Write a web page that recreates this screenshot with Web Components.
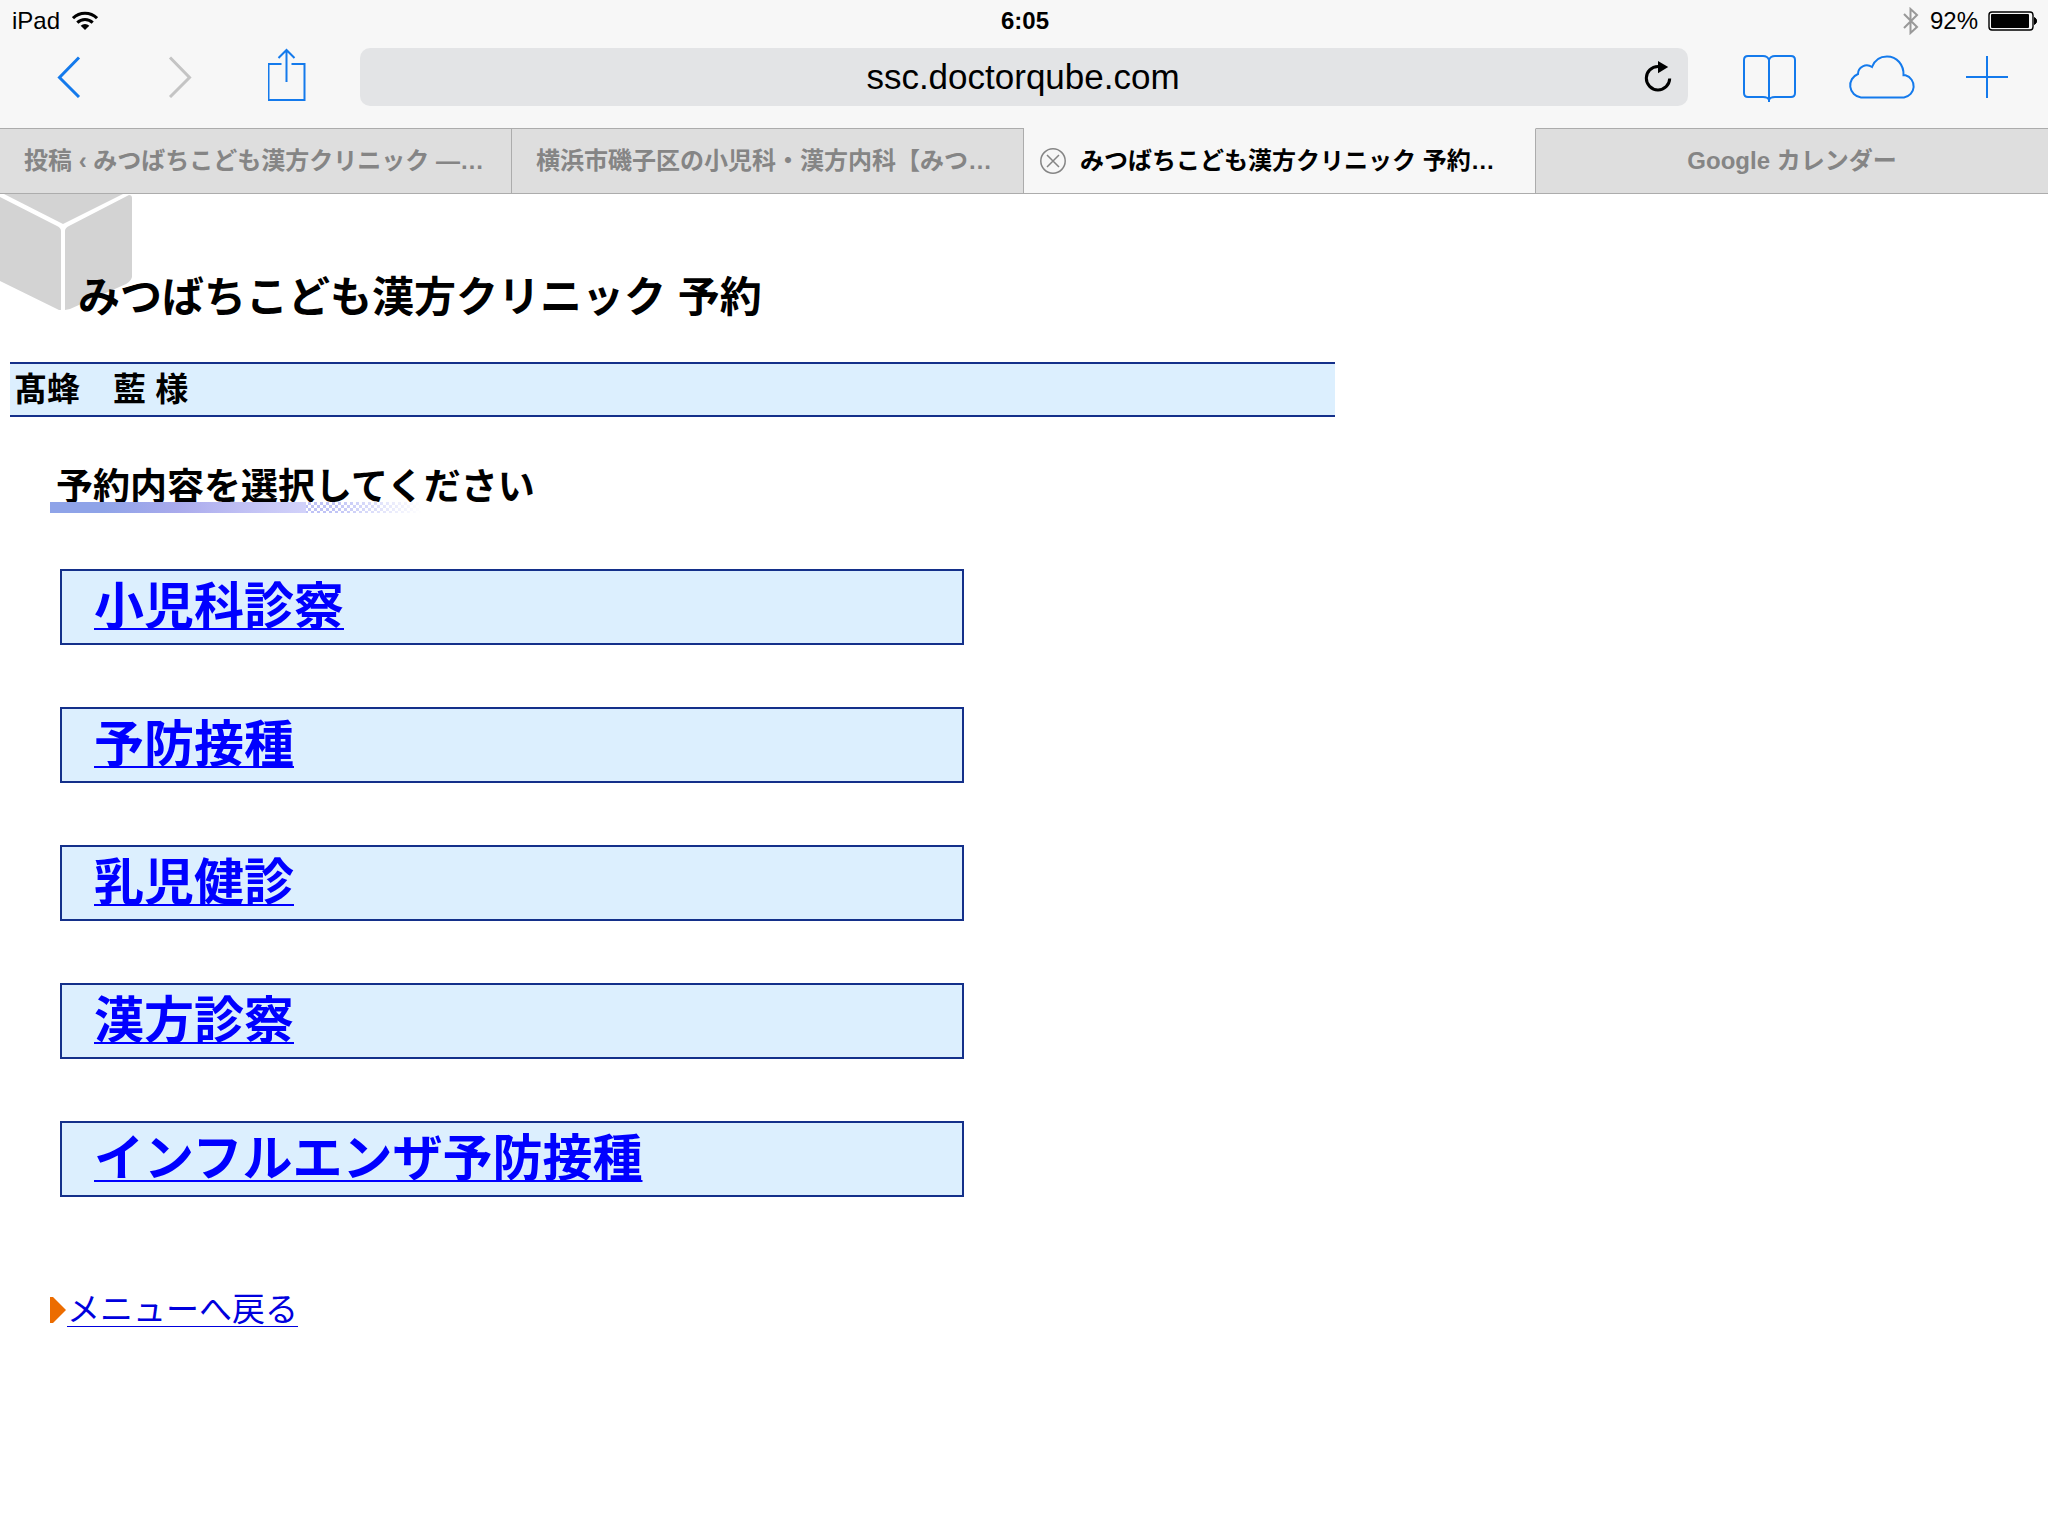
<!DOCTYPE html>
<html lang="ja">
<head>
<meta charset="utf-8">
<meta name="viewport" content="width=device-width, initial-scale=1">
<title>みつばちこども漢方クリニック 予約</title>
<style>
body {
  margin: 0;
  background: #fff;
  color: #000;
  font-family: "Liberation Sans", "Noto Sans CJK JP", sans-serif;
}
</style>
</head>
<body>

<template id="status-bar">
<style>
:host {
  display: grid;
  grid-template-columns: 1fr auto 1fr;
  align-items: center;
  height: 38px;
  padding: 2px 10px 0 12px;
  background: #f7f7f7;
  font-size: 24px;
}
div {
  display: flex;
  align-items: center;
  gap: 12px;
}
.right {
  justify-content: flex-end;
  gap: 10px;
}
svg { display: block; }
</style>
<div>
  <span>iPad</span>
  <svg width="26" height="20" viewBox="0 0 26 20">
    <path d="M1 7.2a17 17 0 0 1 24 0M5.3 11.6a11 11 0 0 1 15.4 0" fill="none" stroke="#000" stroke-width="3"/>
    <path d="M13 19l-4.300-4.300a6.200 6.200 0 0 1 8.600 0z"/>
  </svg>
</div>
<b><slot></slot></b>
<div class="right">
  <svg width="18" height="28" viewBox="0 0 18 28">
    <path d="M2 7l13 13-6.500 6V2l6.500 6L2 21" fill="none" stroke="#999" stroke-width="2"/>
  </svg>
  <span>92%</span>
  <svg width="50" height="20" viewBox="0 0 50 20">
    <rect x="1" y="1" width="44" height="18" rx="3" fill="none" stroke="#000" stroke-width="1.400"/>
    <rect x="3" y="3" width="38" height="14" rx="1"/>
    <path d="M46.500 6.500a4 4 0 0 1 0 7z" stroke="#000"/>
  </svg>
</div>
</template>

<template id="icon-button">
<style>
:host { display: block; }
button {
  display: block;
  padding: 0;
  border: 0;
  background: none;
  color: inherit;
}
</style>
<button type="button"><slot></slot></button>
</template>

<template id="address-field">
<style>
:host {
  display: flex;
  align-items: center;
  flex: 1;
  min-width: 0;
  height: 58px;
  border-radius: 10px;
  background: #e3e4e6;
}
input {
  flex: 1;
  min-width: 0;
  height: 58px;
  margin: 0;
  padding: 0 0 0 42px;
  border: 0;
  background: none;
  font: 35px "Liberation Sans", sans-serif;
  color: #000;
  text-align: center;
}
icon-button { padding-right: 16px; }
svg { display: block; }
</style>
<input type="text" aria-label="アドレス">
<icon-button label="再読み込み">
  <svg width="28" height="32" viewBox="0 0 28 32">
    <path d="M14 5.500A11.700 11.700 0 1 0 25.700 17.500" fill="none" stroke="#000" stroke-width="3"/>
    <path d="M14 0v12.200l10.200-6.100z"/>
  </svg>
</icon-button>
</template>

<template id="browser-toolbar">
<style>
:host {
  display: flex;
  gap: 54px;
  height: 80px;
  padding: 8px 40px 0 48px;
  background: #f7f7f7;
  color: #147aec;
}
div {
  display: flex;
  align-items: center;
  height: 58px;
  gap: 64px;
}
.right { gap: 48px; }
.off { color: #c4c4c4; }
svg {
  display: block;
  fill: none;
  stroke: currentColor;
  stroke-width: 2;
}
</style>
<div>
  <icon-button label="戻る">
    <svg width="46" height="42" viewBox="0 0 46 42"><path d="M31 1.500L11.500 21.500l19.500 19.500" stroke-width="3"/></svg>
  </icon-button>
  <icon-button class="off" label="進む">
    <svg width="46" height="42" viewBox="0 0 46 42"><path d="M12 1.500l19.500 20-19.500 19.500" stroke-width="3"/></svg>
  </icon-button>
  <icon-button label="共有">
    <svg width="38" height="58" viewBox="0 0 38 58"><path d="M13 16H0v36h36V16H23M18 34V2M10 10l8-8 8 8" transform="translate(.5)"/></svg>
  </icon-button>
</div>
<slot></slot>
<div class="right">
  <icon-button label="ブックマーク">
    <svg width="56" height="50" viewBox="0 0 56 50"><path d="M27 8c-1-3-3-4-6-4H6Q2 4 2 8v33q0 4 4 4h15q5 0 6 3 1-3 6-3h16q4 0 4-4V8q0-4-4-4H33c-3 0-5 1-6 4v42"/></svg>
  </icon-button>
  <icon-button label="iCloudタブ">
    <svg width="72" height="46" viewBox="0 0 72 46"><path d="M15 43.500h43a11.400 11.400 0 0 0 1.500-22.200l-2-.1C58 11 51 2.500 41 2.500c-7 0-12.500 4-15 10.500-6-4-14 0-14 7A12.200 12.200 0 0 0 15 43.500z"/></svg>
  </icon-button>
  <icon-button label="新規タブ">
    <svg width="42" height="42" viewBox="0 0 42 42"><path d="M21 0v42M0 21h42"/></svg>
  </icon-button>
</div>
</template>

<template id="browser-tabs">
<style>
:host {
  display: grid;
  grid-template-columns: repeat(4, minmax(0, 1fr));
  height: 66px;
}
</style>
<slot></slot>
</template>

<template id="browser-tab">
<style>
:host {
  display: flex;
  align-items: center;
  box-sizing: border-box;
  padding: 0 16px 0 24px;
  border: 1px solid #acacac;
  border-left: 0;
  background: #dedede;
  color: #858585;
  font-size: 24px;
  font-weight: bold;
}
:host([active]) {
  padding: 0 16px;
  border-top-color: #f7f7f7;
  background: #f7f7f7;
  color: #000;
}
:host(:last-child) { border-right: 0; }
:host([center]) {
  justify-content: center;
  padding: 0 16px;
}
span {
  overflow: hidden;
  line-height: 36px;
  white-space: nowrap;
}
icon-button { display: none; }
:host([active]) icon-button {
  display: block;
  margin-right: 14px;
}
svg {
  display: block;
  fill: none;
  stroke: #858585;
  stroke-width: 1.500;
}
</style>
<icon-button label="タブを閉じる">
  <svg width="26" height="26" viewBox="0 0 26 26"><circle cx="13" cy="13" r="12.200"/><path d="M7 7l12 12M19 7L7 19"/></svg>
</icon-button>
<span><slot></slot></span>
</template>

<template id="clinic-title">
<style>
:host {
  display: block;
  position: relative;
  padding: 76px 10px 36px 78px;
}
svg {
  position: absolute;
  top: 0;
  left: 0;
}
h1 {
  position: relative;
  margin: 0;
  font-size: 42px;
  line-height: 56px;
}
</style>
<svg width="132" height="116" viewBox="0 0 132 116" fill="#d3d3d3">
  <path d="M4 0h119L63 30z"/>
  <path d="M0 3l57 29q4 2 4 5v79h-2L0 87z"/>
  <path d="M129 1q3 0 3 3v79q-1 4-6 7L70 115l-5 1V37q0-3 4-5z"/>
</svg>
<h1><slot></slot></h1>
</template>

<template id="patient-name">
<style>
:host {
  display: block;
  box-sizing: border-box;
  max-width: 1325px;
  margin: 0 10px;
  padding: 0 4px;
  border: solid #14308a;
  border-width: 2px 0;
  background: #dceffe;
  font-size: 33px;
  font-weight: bold;
  line-height: 51px;
}
</style>
<slot></slot>
</template>

<template id="section-heading">
<style>
:host {
  display: block;
  position: relative;
  margin: 47px 50px 0;
  padding-bottom: 1px;
}
h2 {
  margin: 0 6px;
  font-size: 37px;
  line-height: 48px;
}
/* ruled line that breaks up into dots on the right */
:host::after {
  content: "";
  position: absolute;
  bottom: 0;
  left: 0;
  width: 372px;
  height: 11px;
  background:
    linear-gradient(to right, #8ea3e8 20%, #a9aaec 50%, #c0c0f4 76%, #d2d2fa) 0 0 / 256px 11px no-repeat,
    linear-gradient(to right, transparent 76%, #fff),
    repeating-conic-gradient(#fff 0 25%, #bfc3f6 0 50%) 0 0 / 6px 6px;
}
</style>
<h2><slot></slot></h2>
</template>

<template id="reserve-menu">
<style>
:host {
  display: grid;
  gap: 62px;
  max-width: 904px;
  margin: 56px 60px 92px;
}
</style>
<slot></slot>
</template>

<template id="reserve-item">
<style>
:host {
  display: block;
  padding: 0 32px;
  border: 2px solid #14308a;
  background: #dceffe;
  font-size: 50px;
  font-weight: bold;
  line-height: 72px;
}
a {
  color: #00f;
  text-decoration-thickness: 2px;
  text-decoration-skip-ink: none;
  text-underline-offset: 4px;
}
</style>
<a href="#"><slot></slot></a>
</template>

<template id="back-link">
<style>
:host {
  display: flex;
  align-items: center;
  gap: 1px;
  margin: 0 50px;
  font-size: 33px;
  line-height: 42px;
}
a {
  color: #00d;
  text-decoration-thickness: 1px;
  text-decoration-skip-ink: none;
  text-underline-offset: 5px;
}
svg { display: block; }
</style>
<svg width="16" height="26" viewBox="0 0 16 26"><path d="M0 0h3l13 13L3 26H0z" fill="#ec6c00"/></svg>
<a href="#"><slot></slot></a>
</template>

<header>
  <status-bar>6:05</status-bar>
  <browser-toolbar>
    <address-field value="ssc.doctorqube.com"></address-field>
  </browser-toolbar>
  <browser-tabs>
    <browser-tab>投稿 ‹ みつばちこども漢方クリニック —…</browser-tab>
    <browser-tab>横浜市磯子区の小児科・漢方内科【みつ…</browser-tab>
    <browser-tab active>みつばちこども漢方クリニック 予約…</browser-tab>
    <browser-tab center>Google カレンダー</browser-tab>
  </browser-tabs>
</header>

<main>
  <clinic-title>みつばちこども漢方クリニック 予約</clinic-title>
  <patient-name>髙蜂　藍 様</patient-name>
  <section-heading>予約内容を選択してください</section-heading>
  <reserve-menu>
    <reserve-item>小児科診察</reserve-item>
    <reserve-item>予防接種</reserve-item>
    <reserve-item>乳児健診</reserve-item>
    <reserve-item>漢方診察</reserve-item>
    <reserve-item>インフルエンザ予防接種</reserve-item>
  </reserve-menu>
  <back-link>メニューへ戻る</back-link>
</main>

<script>
class BaseElement extends HTMLElement {
  constructor () {
    super()
    const template = document.getElementById(this.localName)
    this.attachShadow({ mode: 'open' })
    .appendChild(template.content.cloneNode(true))
  }
}

class IconButton extends BaseElement {
  connectedCallback() {
    this.shadowRoot.querySelector('button').setAttribute('aria-label', this.getAttribute('label'))
  }
}

class AddressField extends BaseElement {
  connectedCallback() {
    this.shadowRoot.querySelector('input').value = this.getAttribute('value')
  }
}

class StatusBar extends BaseElement {}
class BrowserToolbar extends BaseElement {}
class BrowserTabs extends BaseElement {}
class BrowserTab extends BaseElement {}
class ClinicTitle extends BaseElement {}
class PatientName extends BaseElement {}
class SectionHeading extends BaseElement {}
class ReserveMenu extends BaseElement {}
class ReserveItem extends BaseElement {}
class BackLink extends BaseElement {}

customElements.define('icon-button', IconButton)
customElements.define('address-field', AddressField)
customElements.define('status-bar', StatusBar)
customElements.define('browser-toolbar', BrowserToolbar)
customElements.define('browser-tabs', BrowserTabs)
customElements.define('browser-tab', BrowserTab)
customElements.define('clinic-title', ClinicTitle)
customElements.define('patient-name', PatientName)
customElements.define('section-heading', SectionHeading)
customElements.define('reserve-menu', ReserveMenu)
customElements.define('reserve-item', ReserveItem)
customElements.define('back-link', BackLink)
</script>
</body>
</html>
